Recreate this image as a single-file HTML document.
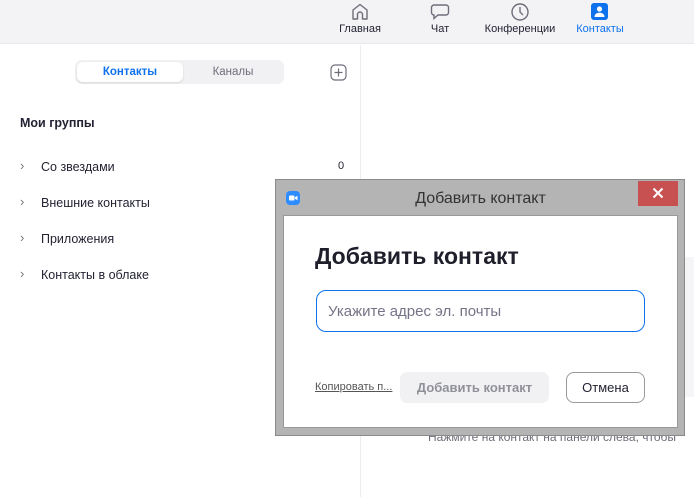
<!DOCTYPE html>
<html><head><meta charset="utf-8"><style>
*{margin:0;padding:0;box-sizing:border-box}
body{width:694px;height:497px;overflow:hidden;background:#fff;font-family:"Liberation Sans","DejaVu Sans",sans-serif;position:relative;color:#232333}
.a{position:absolute}
.top{left:0;top:0;width:694px;height:44px;background:#f3f3f6;border-bottom:1px solid #e8e8ec}
.nav{font-size:11px;text-align:center;top:23px;color:#232333}
.row{left:20px;font-size:12.5px;color:#232333}
.chev{color:#777;font-size:13px}
</style></head><body>
<div class="a top"></div>
<svg class="a" style="left:350px;top:2px" width="20" height="20" viewBox="0 0 20 20"><path d="M3 17V8L10 2.5 17 8V17H12.5V12.5a2.5 2.5 0 0 0-5 0V17Z" fill="none" stroke="#6e6e7a" stroke-width="1.4" stroke-linejoin="round"/></svg>
<div class="a nav" style="left:330px;width:60px">Главная</div>
<svg class="a" style="left:430px;top:3px" width="20" height="18" viewBox="0 0 20 18"><path d="M4 2h12a2.5 2.5 0 0 1 2.5 2.5v5A2.5 2.5 0 0 1 16 12H8l-4 3.5V12A2.5 2.5 0 0 1 1.5 9.5v-5A2.5 2.5 0 0 1 4 2Z" fill="none" stroke="#6e6e7a" stroke-width="1.4"/></svg>
<div class="a nav" style="left:420px;width:40px">Чат</div>
<svg class="a" style="left:510px;top:2px" width="20" height="20" viewBox="0 0 20 20"><circle cx="10" cy="10" r="8" fill="none" stroke="#6e6e7a" stroke-width="1.4"/><path d="M10 5v5l3 3" fill="none" stroke="#6e6e7a" stroke-width="1.4"/></svg>
<div class="a nav" style="left:476px;width:88px">Конференции</div>
<svg class="a" style="left:591px;top:3px" width="17" height="17" viewBox="0 0 17 17"><rect width="17" height="17" rx="3" fill="#0e72ed"/><circle cx="8.5" cy="6" r="2.6" fill="#fff"/><path d="M3.5 14c0-3 2.2-4.3 5-4.3s5 1.3 5 4.3Z" fill="#fff"/></svg>
<div class="a nav" style="left:570px;width:60px;color:#0e72ed">Контакты</div>
<div class="a" style="left:360px;top:45px;width:1px;height:452px;background:#ececf0"></div>
<div class="a" style="left:75px;top:60px;width:209px;height:24px;background:#f1f1f4;border-radius:7px"></div>
<div class="a" style="left:77px;top:62px;width:106px;height:20px;background:#fff;border-radius:6px;box-shadow:0 1px 2px rgba(0,0,0,.12);font-size:11.5px;font-weight:bold;color:#0e72ed;text-align:center;line-height:20px">Контакты</div>
<div class="a" style="left:183px;top:62px;width:100px;height:20px;font-size:11.5px;color:#6e6e7a;text-align:center;line-height:20px">Каналы</div>
<svg class="a" style="left:330px;top:64px" width="17" height="17" viewBox="0 0 17 17"><rect x="1" y="1" width="15" height="15" rx="4" fill="none" stroke="#6e6e7a" stroke-width="1.2"/><path d="M8.5 4.5v8M4.5 8.5h8" stroke="#6e6e7a" stroke-width="1.2"/></svg>
<div class="a" style="left:20px;top:116px;font-size:12.5px;font-weight:bold">Мои группы</div>
<div class="a chev" style="left:20px;top:158px">›</div><div class="a row" style="left:41px;top:160px">Со звездами</div><div class="a row" style="left:338px;top:160px;font-size:11px">0</div>
<div class="a chev" style="left:20px;top:194px">›</div><div class="a row" style="left:41px;top:196px">Внешние контакты</div>
<div class="a chev" style="left:20px;top:230px">›</div><div class="a row" style="left:41px;top:232px">Приложения</div>
<div class="a chev" style="left:20px;top:266px">›</div><div class="a row" style="left:41px;top:268px">Контакты в облаке</div>
<div class="a" style="left:683px;top:257px;width:11px;height:140px;background:#f5f5f7"></div>
<div class="a" style="left:428px;top:430px;font-size:12px;color:#6e6e7a;white-space:nowrap">Нажмите на контакт на панели слева, чтобы</div>
<div class="a" style="left:275px;top:179px;width:410px;height:257px;background:#b4b4b4;border:1px solid #8a8a8a"></div>
<svg class="a" style="left:286px;top:191px" width="14" height="14" viewBox="0 0 14 14"><rect width="14" height="14" rx="4" fill="#2d8cff"/><rect x="3" y="4.5" width="5.5" height="5" rx="1" fill="#fff"/><path d="M9 6.2l2.5-1.5v4.6L9 7.8Z" fill="#fff"/></svg>
<div class="a" style="left:283px;top:190px;width:395px;text-align:center;font-size:16px;color:#333">Добавить контакт</div>
<div class="a" style="left:638px;top:181px;width:40px;height:25px;background:#c75050"></div>
<svg class="a" style="left:652px;top:187px" width="12" height="12" viewBox="0 0 12 12"><path d="M1.5 1.5l9 9M10.5 1.5l-9 9" stroke="#fff" stroke-width="2"/></svg>
<div class="a" style="left:283px;top:215px;width:395px;height:213px;background:#fff;border:1px solid #999"></div>
<div class="a" style="left:315px;top:243px;font-size:23px;font-weight:bold;color:#1f1f2b">Добавить контакт</div>
<div class="a" style="left:316px;top:290px;width:329px;height:42px;border:1px solid #0e72ed;border-radius:10px;font-size:15px;color:#747487;padding-left:11px;line-height:42px">Укажите адрес эл. почты</div>
<div class="a" style="left:315px;top:381px;font-size:11px;color:#555;text-decoration:underline">Копировать п...</div>
<div class="a" style="left:400px;top:372px;width:149px;height:31px;background:#f1f1f4;border-radius:7px;font-size:13px;font-weight:bold;color:#909099;text-align:center;line-height:31px">Добавить контакт</div>
<div class="a" style="left:566px;top:372px;width:79px;height:31px;border:1px solid #999;border-radius:8px;font-size:13px;color:#232333;text-align:center;line-height:29px">Отмена</div>
</body></html>
